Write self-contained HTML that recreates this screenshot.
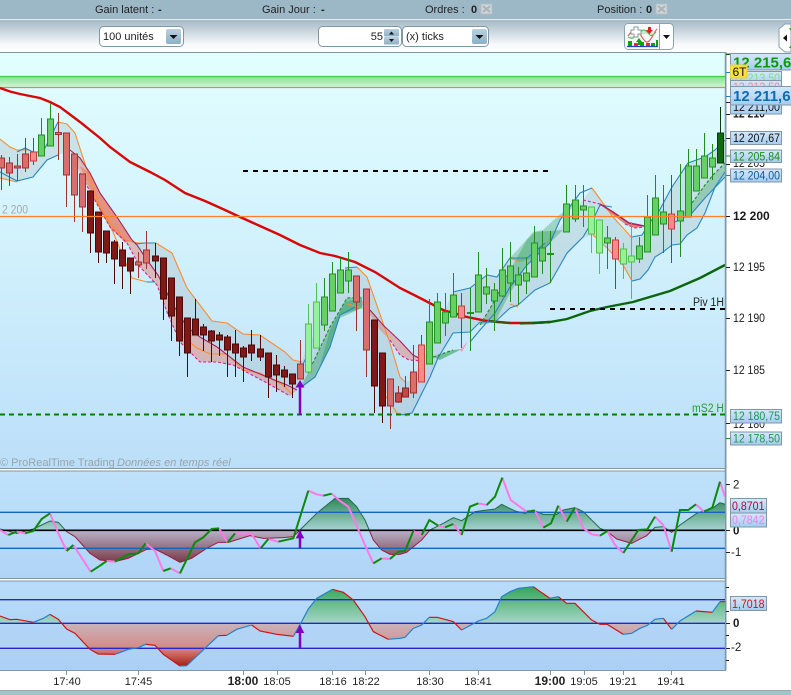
<!DOCTYPE html>
<html><head><meta charset="utf-8"><style>
html,body{margin:0;padding:0;background:#fff}
svg{display:block}
text{font-family:"Liberation Sans",sans-serif;font-size:11px;fill:#222}
.b{font-weight:bold}
.ax{font-size:11.5px;fill:#1a1a1a}
.lb{font-size:11.5px}
.t{text-anchor:middle;font-size:11px;fill:#222}
.w{fill:none}
</style></head><body>
<svg width="791" height="695" viewBox="0 0 791 695" xmlns="http://www.w3.org/2000/svg">
<defs>
<linearGradient id="tb" x1="0" y1="0" x2="0" y2="1"><stop offset="0" stop-color="#a3b9c6"/><stop offset=".75" stop-color="#f6f8fa"/><stop offset="1" stop-color="#fff"/></linearGradient>
<linearGradient id="main" x1="0" y1="0" x2="0" y2="1"><stop offset="0" stop-color="#e2ffff"/><stop offset=".5" stop-color="#d0f0fc"/><stop offset="1" stop-color="#bcdff9"/></linearGradient>
<linearGradient id="p2" x1="0" y1="0" x2="0" y2="1"><stop offset="0" stop-color="#bfe2fa"/><stop offset="1" stop-color="#b0d4f6"/></linearGradient>
<linearGradient id="p3" x1="0" y1="0" x2="0" y2="1"><stop offset="0" stop-color="#b8dcf8"/><stop offset="1" stop-color="#accff5"/></linearGradient>
<linearGradient id="band" x1="0" y1="0" x2="0" y2="1"><stop offset="0" stop-color="#7fe08e"/><stop offset="1" stop-color="#d4f8dc"/></linearGradient>
<linearGradient id="btn" x1="0" y1="0" x2="0" y2="1"><stop offset="0" stop-color="#b9d1df"/><stop offset="1" stop-color="#8cb0c4"/></linearGradient>
<linearGradient id="lab" x1="0" y1="0" x2="0" y2="1"><stop offset="0" stop-color="#d4e8fa"/><stop offset="1" stop-color="#a6ccf0"/></linearGradient>
<linearGradient id="a2" gradientUnits="userSpaceOnUse" x1="0" y1="100" x2="0" y2="292"><stop offset="0" stop-color="#2f8a5a"/><stop offset=".5" stop-color="#a8d2d2"/><stop offset=".5" stop-color="#b8b2ca"/><stop offset="1" stop-color="#7a3a48"/></linearGradient>
<linearGradient id="a3" gradientUnits="userSpaceOnUse" x1="0" y1="365" x2="0" y2="605"><stop offset="0" stop-color="#35a55c"/><stop offset=".458" stop-color="#a6d6c8"/><stop offset=".458" stop-color="#c8b4bc"/><stop offset=".77" stop-color="#d48a84"/><stop offset="1" stop-color="#a81c10"/></linearGradient>
<linearGradient id="s2" gradientUnits="userSpaceOnUse" x1="0" y1="100" x2="0" y2="292"><stop offset="0" stop-color="#1f6a4a"/><stop offset=".5" stop-color="#1f6a4a"/><stop offset=".5" stop-color="#9a1c40"/><stop offset="1" stop-color="#9a1c40"/></linearGradient>
<clipPath id="cm"><rect x="0" y="52" width="725" height="416"/></clipPath>
<clipPath id="c2"><rect x="0" y="471" width="725" height="108"/></clipPath>
<clipPath id="c3"><rect x="0" y="581" width="725" height="89"/></clipPath>
</defs>

<!-- top bar -->
<rect width="791" height="695" fill="#fff"/>
<rect width="791" height="19" fill="#9cb8c6"/>
<rect y="19" width="791" height="1" fill="#e6eef2"/>
<rect y="20" width="791" height="32" fill="url(#tb)"/>
<text x="95" y="13">Gain latent :</text><text x="158" y="13" class="b">-</text>
<text x="262" y="13">Gain Jour :</text><text x="321" y="13" class="b">-</text>
<text x="425" y="13">Ordres :</text><text x="471" y="13" class="b">0</text>
<rect x="481" y="4" width="11" height="10" fill="#cfd6da" stroke="#b4bec4"/><path d="M483 6l7 6M490 6l-7 6" stroke="#a9b3b8" stroke-width="2"/>
<text x="597" y="13">Position :</text><text x="646" y="13" class="b">0</text>
<rect x="656" y="4" width="11" height="10" fill="#cfd6da" stroke="#b4bec4"/><path d="M658 6l7 6M665 6l-7 6" stroke="#a9b3b8" stroke-width="2"/>

<!-- toolbar -->
<rect x="99.5" y="26.5" width="84" height="20" rx="4" fill="#fff" stroke="#7f98a8"/>
<text x="103" y="40">100 unités</text>
<rect x="166" y="29" width="15" height="15" rx="2" fill="url(#btn)"/><path d="M169.5 35h8l-4 4z" fill="#111"/>
<rect x="318.5" y="26.5" width="83" height="20" rx="4" fill="#fff" stroke="#7f98a8"/>
<text x="383" y="40" text-anchor="end">55</text>
<rect x="384" y="29" width="15" height="7.5" rx="1" fill="url(#btn)"/><rect x="384" y="37" width="15" height="7.5" rx="1" fill="url(#btn)"/>
<path d="M389 34.5l2.5-3 2.5 3z M389 39l2.5 3 2.5-3z" fill="#111"/>
<rect x="402.5" y="26.5" width="86" height="20" rx="4" fill="#fff" stroke="#7f98a8"/>
<text x="406" y="40">(x) ticks</text>
<rect x="472" y="29" width="15" height="15" rx="2" fill="url(#btn)"/><path d="M475.5 35h8l-4 4z" fill="#111"/>

<rect x="624.5" y="23.5" width="49" height="26" rx="4" fill="#fff" stroke="#8aa2b2"/>
<rect x="625" y="24" width="34" height="25" rx="3" fill="#f6fafb"/>
<path d="M659.5 24V49" stroke="#8aa2b2"/>
<path d="M663 35h7l-3.5 4z" fill="#111"/>
<path d="M628 36c5-7 8-8 12-2s6 11 10 6 4-8 7-11" fill="none" stroke="#e06060" stroke-width="1.2"/>
<path d="M628 37c5 3 7 0 11-4s6-4 9 0 5 3 8-1" fill="#b4e0b4" fill-opacity=".7" stroke="#50b050"/>
<path d="M631 30h3v-3h4v3h3v4h-3v3h-4v-3h-3z" fill="#fff" stroke="#8b9aa2"/>
<path d="M636 42l3-4 3 4h-2v3h-2v-3z" fill="#10a010"/>
<path d="M648 27h3v3h2l-3.5 4-3.5-4h2z" fill="#e02020"/>
<path d="M628 41h4v5h-4zM640 42h4v4h-4zM651 43h4v3h-4zM656 40h2v6h-2zM634 43h4v3h-4zM646 43h4v3h-4z" fill="#10a010"/>
<path d="M634 43h3v3h-3zM646 43h3v3h-3z" fill="#e03030"/>
<path d="M627 46.5h31" stroke="#2040d0" stroke-width="1.2"/>
<path d="M791 24h-6l-6 5v18l6 5h6z" fill="#fff" stroke="#8aa2b2"/>
<path d="M783 38l4-3.500v7z" fill="#111"/><path d="M789 28l2 3v-3zM789 48l2-3v3z" fill="#20a020"/>

<!-- panels -->
<rect x="0" y="52" width="725" height="416" fill="url(#main)"/>
<rect x="0" y="471" width="725" height="108" fill="url(#p2)"/>
<rect x="0" y="581" width="725" height="89" fill="url(#p3)"/>
<path d="M0 52.5H726V670M0 468.5H725M0 471H725M0 578.500H725M0 581H725M0 670.5H726" fill="none" stroke="#7f97a6"/>
<path d="M725.5 52V670" stroke="#7f97a6" stroke-width="1.5"/>

<!-- main chart -->
<g clip-path="url(#cm)">
<rect x="0" y="76" width="725" height="12" fill="url(#band)"/>
<path d="M0 76.5H725" stroke="#40d040" stroke-width="1.2"/>
<path d="M0 87.5H725" stroke="#e08080" stroke-width="1.2"/>
<text x="2" y="213.5" textLength="26" lengthAdjust="spacingAndGlyphs" style="fill:#a8a8a8;font-size:11.5px">2 200</text>
<text x="0" y="466" style="fill:#9aa3ab;font-size:11px">© ProRealTime Trading</text>
<text x="117" y="466" style="fill:#9aa3ab;font-size:11px;font-style:italic">Données en temps réel</text>

<!-- grey channels -->
<g fill="#8a9ca0" fill-opacity=".22">
<path d="M0 139L10 147 17 150 25 148 33 152 43 152 58 122 67 124 75 133 87 170 70 150 58 155 47 160 33 177 17 181 0 178Z"/>
<path d="M113 232L125 240 138 243 156 243 172 253 187 288 212 321 227 323 243 334 260 335 285 352 293 360 302 362 297 390 287 385 267 377 243 367 217 347 200 337 183 337 172 303 158 275 147 260 137 245 127 240Z"/>
<path d="M302 360L330 300 347 267 357 267 367 277 390 343 400 377 405 382 412 380 423 360 430 345 445 310 453 292 470 288 487 275 497 277 510 258 527 258 545 243 557 230 573 213 592 188 613 217 623 230 632 238 642 235 650 222 658 213 672 187 688 163 705 157 715 150 725 140V172L715 187 705 213 697 228 687 235 680 244 672 245 663 252 655 257 648 270 640 279 632 281 623 265 607 248 593 235 583 238 567 255 550 283 535 290 518 305 510 308 495 322 480 322 470 332 453 333 438 358 430 377 420 397 412 413 400 415 392 413 380 370 372 330 362 308 340 315 330 347 315 377 300 390Z"/>
</g>
<!-- red fills -->
<path d="M70 150L80 158 90 173 100 193 117 217 132 240 137 245 147 260 158 275 172 303 187 327 200 337 217 347 243 367 267 377 287 385 297 390 290 396 267 383 233 365 217 362 200 362 180 342 167 312 157 285 140 267 127 243 112 230 110 227 93 197 80 173Z" fill="#e4705c" fill-opacity=".42"/>
<path d="M80 166L90 173 100 193 117 217 132 240 125 243 110 227 93 197Z" fill="#ea6a4c" fill-opacity=".5"/>
<path d="M362 300L370 310 383 325 400 341 413 355 423 360 409 360 400 355 390 340 380 330 370 315 362 305Z" fill="#e4705c" fill-opacity=".42"/>
<path d="M600 204L613 212 629 223 644 226 635 228 625 224 613 215Z" fill="#ef6a54" fill-opacity=".85"/>
<path d="M460 350L468 341 462 352Z" fill="#f0a0c0"/>
<!-- green fills -->
<path d="M300 388L308 373 330 327 347 298 362 297 362 308 340 315 330 347 315 377Z" fill="#2a9a5c" fill-opacity=".4"/>
<path d="M320 365L330 347 340 318 362 308 362 297 345 302 330 330Z" fill="#2a9a5c" fill-opacity=".4"/>
<path d="M433 357L453 350 462 349 440 360Z" fill="#3aa05c" fill-opacity=".6"/>
<path d="M480 325L492 305 510 270 527 240 535 232 563 230 527 265 510 293 495 322Z" fill="#3aa05c" fill-opacity=".42"/>
<path d="M510 258L520 247 533 232 543 230 557 217 562 213 575 200 575 205 560 220 550 243 533 258 520 262Z" fill="#3aa05c" fill-opacity=".35"/>
<path d="M675 222L692 203 705 185 713 175 725 163V177L705 198 692 213Z" fill="#3aa05c" fill-opacity=".35"/>

<!-- red/green MA -->
<path d="M0 88L10 91.5 20 94 40 98 50 102 60 107 80 122 100 138 110 147 130 162 150 172 165 180 185 193 205 201 225 210 240 217 260 226 280 235 300 245 320 253 335 256 355 262 375 272 400 288 420 298 443 310 467 317 487 321 510 323 533 323 550 322" fill="none" stroke="#d80606" stroke-width="2.4"/>
<path d="M487 321L510 323M520 323.5L533 323" stroke="#0a6a0a" stroke-width="2.4" fill="none" opacity=".7"/>
<path d="M533 323L550 322 567 319 590 311 607 307 633 302 670 291 700 278 725 265" fill="none" stroke="#0b660b" stroke-width="2.4"/>

<!-- band lines -->
<g fill="none" stroke="#ff8a2a" stroke-width="1.1">
<path d="M0 139L10 147 17 150 30 150"/>
<path d="M0 178L17 182"/>
<path d="M58 122L67 124 75 133 87 170 100 207 110 223 125 240 138 243 156 243 172 253 187 288 212 321 227 323 243 334 260 335 285 352 293 360 302 362"/>
<path d="M90 190L113 232 132 278 147 282 155 282"/>
<path d="M183 337L197 348 210 354 227 354 243 370 260 373 283 385 293 395"/>
<path d="M357 267L367 277 390 343 400 377 405 382"/>
<path d="M347 304L362 308"/>
<path d="M385 395L397 413 407 416"/>
<path d="M510 258L520 262M510 304L518 307"/>
<path d="M592 188L613 217 632 238M593 235L607 248 623 265 632 281"/>
</g>
<g fill="none" stroke="#2a86c0" stroke-width="1.1">
<path d="M17 152L25 148 33 152 43 152 58 122"/>
<path d="M0 172L17 181 33 177 47 160 58 155"/>
<path d="M135 244L145 243 156 243M147 282L155 282"/>
<path d="M300 388L315 377 330 347 340 315 355 307"/>
<path d="M302 366L308 354M345 268L357 267"/>
<path d="M400 415L412 413 420 397 430 377 438 358 453 333 470 332 480 322 495 322 510 308 518 305 535 290 550 283 567 253 583 237 592 222 600 205 612 207"/>
<path d="M470 342L480 330 495 313 510 287 527 265 550 243 560 220 580 193 592 188"/>
<path d="M453 292L470 288 487 275 497 277 510 258 527 258 545 243"/>
<path d="M632 281L640 279 648 270 655 257 663 252 672 245 680 244 687 235 697 228 705 213 715 187 725 172"/>
<path d="M632 237L642 235 650 222 658 213 672 187 688 163 705 157 715 150 725 140"/>
<path d="M675 222L692 213 705 198 725 177"/>
</g>
<g fill="none" stroke="#a82060" stroke-width="1.1">
<path d="M70 150L80 158 90 173 100 193 117 217 132 240 137 245 147 260 158 275 172 303 187 327 200 337 217 347 243 367 267 377 287 385 297 390"/>
<path d="M370 310L383 325 400 341 413 355 423 360"/>
<path d="M600 204L613 212 629 223 644 226" stroke-width="1.5"/>
</g>
<g fill="none" stroke="#d8209a" stroke-width="1.1" stroke-dasharray="3 2">
<path d="M80 173L93 197 110 227 127 243 140 267 157 285 167 312 180 342 200 362 217 362 233 365 267 383 290 396"/>
<path d="M390 340L400 355 409 360 423 361"/>
<path d="M625 224L635 228 644 227M583 200L600 204"/>
</g>
<g fill="none" stroke="#1a9020" stroke-width="1.1" stroke-dasharray="3 2">
<path d="M308 373L330 327 347 298 362 297"/>
<path d="M433 357L453 350M480 325L492 305 510 270"/>
<path d="M692 203L705 185 713 175 725 163"/>
</g>

<!-- candle wicks -->
<path class="w" stroke="#a03232" d="M1.5 155V190M9.5 157V186M17.5 154V181M25.5 138V172M58.5 113V160M66.5 133V207M74.5 154V222M82.5 174V232M138.5 252V278M146.5 231V269M300.5 340V379M356.5 276V331M366.5 289V377M390.5 379V429M413.5 345V398M398.5 386V403M405.5 376V397M33.5 138V165M421.5 335V382M461.5 293V348M615.5 237V289M671.5 175V263"/>
<path class="w" stroke="#4a0808" d="M90.5 191V253M98.5 212V263M106.5 231V263M114.5 240V284M122.5 242V289M130.5 258V294M155.5 243V278M163.5 258V320M171.5 278V341M179.5 297V356M187.5 318V377M195.5 299V335M203.5 324V351M211.5 330V362M219.5 332V356M227.5 335V377M235.5 330V377M243.5 346V382M251.5 330V361M260.5 335V361M268.5 353V398M276.5 355V392M284.5 366V387M292.5 374V398M374.5 320V413M382.5 353V423"/>
<path class="w" stroke="#1e8c1e" d="M41.5 118V156M50.5 103V146M324.5 278V331M332.5 262V311M340.5 258V293M348.5 252V293M429.5 299V364M437.5 293V343M445.5 293V336M453.5 273V317M470.5 288V351M478.5 252V312M486.5 268V304M494.5 283V331M502.5 248V297M510.5 242V302M518.5 267V305M526.5 257V294M534.5 226V277M542.5 231V274M550.5 231V283M566.5 185V232M575.5 185V222M583.5 185V227M607.5 226V269M639.5 237V263M647.5 195V252M655.5 175V235M663.5 185V253M680.5 164V257M688.5 149V217M696.5 149V191M704.5 133V178M712.5 144V180"/>
<path class="w" stroke="#50c050" d="M308.5 304V372M316.5 283V348M591.5 207V253M599.5 220V274M623.5 243V279M631.5 222V299"/>
<path class="w" stroke="#0a3a0a" d="M720.5 107V163"/>
<!-- candle bodies -->
<path fill="#d96e6e" stroke="#a03232" d="M-1.5 158h6v10h-6zM6.5 163h6v10h-6zM14.5 166h6v2h-6zM22.5 154h6v14h-6zM55.5 132.500h6v2h-6zM63.5 133h6v42h-6zM71.5 154h6v41h-6zM79.5 174h6v33h-6zM135.5 262h6v3h-6zM143.5 250h6v13h-6zM297.5 364h6v15h-6zM353.5 276h6v26h-6zM363.5 289h6v61h-6zM387.5 379h6v27h-6zM410.5 372h6v21h-6z"/>
<path fill="#c04a4a" stroke="#8a2020" d="M395.5 393h6v9h-6zM402.5 388h6v9h-6z"/>
<path fill="#fa8a8a" stroke="#c04040" d="M30.5 152h6v9h-6zM418.5 345h6v37h-6zM458.5 306h6v12h-6zM612.5 240h6v19h-6zM668.5 214h6v15h-6z"/>
<path fill="#801818" stroke="#4a0808" d="M87.5 191h6v42h-6zM95.5 212h6v40h-6zM103.5 231h6v22h-6zM111.5 242h6v17h-6zM119.5 250h6v16h-6zM127.5 258h6v13h-6zM152.5 256h6v5h-6zM160.5 258h6v41h-6zM168.5 278h6v38h-6zM176.5 297h6v44h-6zM184.5 318h6v35h-6zM192.5 319h6v16h-6zM200.5 327h6v8h-6zM208.5 331h6v10h-6zM216.5 335h6v5h-6zM224.5 337h6v13h-6zM232.5 344h6v9h-6zM240.5 348h6v9h-6zM248.5 345h6v8h-6zM257.5 349h6v8h-6zM265.5 353h6v24h-6zM273.5 365h6v10h-6zM281.5 370h6v7h-6zM289.5 374h6v10h-6zM371.5 320h6v66h-6zM379.5 353h6v53h-6z"/>
<path fill="#66cf66" stroke="#228f22" d="M38.5 135h6v21h-6zM47.5 119h6v27h-6zM321.5 297h6v28h-6zM329.5 274h6v37h-6zM337.5 270h6v23h-6zM345.5 270h6v11h-6zM426.5 322h6v42h-6zM434.5 302h6v41h-6zM442.5 312h6v11h-6zM450.5 295h6v22h-6zM467.5 312.500h6v1h-6zM475.5 275h6v37h-6zM483.5 287h6v7h-6zM491.5 290h6v11h-6zM499.5 270h6v26h-6zM507.5 266h6v17h-6zM515.5 275h6v10h-6zM523.5 273h6v8h-6zM531.5 243h6v34h-6zM539.5 248h6v13h-6zM547.5 253.500h6v1h-6zM563.5 204h6v28h-6zM572.5 200h6v19h-6zM580.5 206h6v4h-6zM604.5 238h6v5h-6zM636.5 246h6v13h-6zM644.5 217h6v35h-6zM652.5 198h6v37h-6zM660.5 212h6v12h-6zM677.5 211h6v10h-6zM685.5 166h6v51h-6zM693.5 166h6v25h-6zM701.5 156h6v22h-6zM709.5 158h6v9h-6z"/>
<path fill="#98f098" stroke="#50c050" d="M305.5 324h6v48h-6zM313.5 302h6v46h-6zM588.5 207h6v27h-6zM596.5 220h6v33h-6zM620.5 249h6v15h-6zM628.5 256h6v6h-6z"/>
<path fill="#0f6a0f" stroke="#0a3a0a" d="M717.5 133h6v30h-6z"/>

<!-- levels -->
<path d="M0 216.5H725" stroke="#ff7f2a" stroke-width="1.2"/>
<path d="M243 171H548" stroke="#000" stroke-width="2" stroke-dasharray="5 5"/>
<path d="M550 309H725" stroke="#000" stroke-width="2" stroke-dasharray="5 5"/>
<path d="M0 414.5H725" stroke="#008000" stroke-width="2" stroke-dasharray="5 4"/>
<text x="693" y="306" textLength="31" lengthAdjust="spacingAndGlyphs" style="font-size:11.5px;fill:#222">Piv 1H</text>
<text x="692" y="412" textLength="32" lengthAdjust="spacingAndGlyphs" style="font-size:11.5px;fill:#2a9a2a">mS2 H</text>
<path d="M300 415V386" stroke="#8000c0" stroke-width="2.5"/><path d="M300 380l-4.500 7.500h9z" fill="#8000c0"/>
</g>

<!-- panel 2 -->
<g clip-path="url(#c2)">
<g transform="translate(0,465) scale(.33333)">
<path d="M0 196L0 192 50 205 100 192 150 168 175 172 200 200 225 215 270 265 300 285 345 290 385 280 440 253 465 252 500 270 540 292 575 280 620 250 655 232 685 232 750 212 790 220 850 218 880 215 900 195 950 145 1005 100 1045 100 1070 125 1095 165 1120 225 1145 255 1170 268 1200 268 1220 262 1265 225 1290 195 1330 175 1360 158 1385 167 1425 140 1485 132 1505 118 1545 138 1575 145 1600 135 1630 148 1670 148 1690 135 1725 128 1750 140 1800 190 1820 198 1850 222 1895 235 1940 212 1965 187 1990 185 2015 202 2040 180 2090 145 2140 128 2160 113 2175 118V196Z" fill="url(#a2)"/>
<path d="M0 192L50 205 100 192 150 168 175 172 200 200 225 215 270 265 300 285 345 290 385 280 440 253 465 252 500 270 540 292 575 280 620 250 655 232 685 232 750 212 790 220 850 218 880 215 900 195 950 145 1005 100 1045 100 1070 125 1095 165 1120 225 1145 255 1170 268 1200 268 1220 262 1265 225 1290 195 1330 175 1360 158 1385 167 1425 140 1485 132 1505 118 1545 138 1575 145 1600 135 1630 148 1670 148 1690 135 1725 128 1750 140 1800 190 1820 198 1850 222 1895 235 1940 212 1965 187 1990 185 2015 202 2040 180 2090 145 2140 128 2160 113 2175 118" fill="none" stroke="url(#s2)" stroke-width="3"/>
<path d="M0 142H2175M0 250H2175" stroke="#1565c0" stroke-width="4"/>
<path d="M0 196H2175" stroke="#000" stroke-width="5"/>
<path fill="none" stroke="#ff78e8" stroke-width="6" d="M0 195L25 210M50 200L75 205M150 145L175 205 200 258M220 240L272 320M320 288L345 290M437 235L465 258 490 318M512 310L540 325M657 190L683 232M705 205L755 207 782 250M805 222L835 230M925 77L950 88 970 92M995 86L1020 108 1045 125 1095 240 1120 295M1145 280L1170 282M1240 198L1265 210M1315 182L1335 187M1360 177L1385 210M1435 115L1460 120M1507 38L1532 105 1580 140M1605 137L1630 188M1675 122L1700 170M1725 128L1750 190 1775 208 1800 212M1822 198L1845 240 1870 264M1965 155L1990 180 2015 260M2088 118L2112 140M2160 50L2175 95"/>
<path fill="none" stroke="#0a8a0a" stroke-width="6" d="M25 210L50 200M75 205L100 198 125 162 150 145M200 258L220 240M272 320L300 302 320 288M345 290L385 268 415 265 437 235M490 318L512 310M540 325L585 232 610 217 635 192 657 190M683 232L705 205M782 250L805 222M835 230L880 220 925 77M970 92L995 86M1120 295L1145 280M1170 282L1195 260 1215 258 1240 198M1265 210L1288 165 1315 182M1335 187L1360 177M1385 210L1410 125 1435 115M1460 120L1485 95 1507 38M1580 140L1605 137M1630 188L1653 175 1675 122M1700 170L1725 128M1800 212L1822 198M1870 264L1915 195 1942 193 1965 155M2015 260L2040 135 2065 135 2088 118M2112 140L2137 128 2160 50"/>
<path d="M900 196V250" stroke="#8000c0" stroke-width="7.5"/><path d="M900 196l-13 24h26z" fill="#8000c0"/>
</g>
</g>

<!-- panel 3 -->
<g clip-path="url(#c3)">
<g transform="translate(0,465) scale(.33333)">
<path d="M0 475V453L30 464 50 463 100 472 130 460 150 448 175 463 200 492 225 505 270 553 295 567 345 568 385 553 415 548 437 538 465 541 490 568 540 603 560 602 620 545 655 512 680 511 710 493 755 480 780 498 830 508 880 514 905 470 925 432 950 400 997 373 1030 382 1060 405 1095 455 1120 500 1165 523 1200 520 1215 517 1240 490 1265 480 1288 457 1312 457 1360 470 1385 495 1435 468 1460 460 1485 440 1505 395 1530 380 1555 370 1600 365 1625 383 1650 400 1675 395 1700 415 1725 415 1775 465 1800 478 1822 478 1870 508 1895 505 1920 490 1942 481 1965 463 1990 460 2015 493 2040 468 2088 438 2137 442 2160 410 2175 410V475Z" fill="url(#a3)"/>
<path d="M0 404H2175M0 475H2175M0 550H2175" stroke="#2626cc" stroke-width="4"/>
<path fill="none" stroke="#d01010" stroke-width="3.5" d="M0 453L30 464 50 463 100 472M150 448L175 463 200 492 225 505 270 553 295 567 345 568M437 538L465 541 490 568 540 603M655 512L680 511M755 480L780 498 830 508 880 514M997 373L1030 382 1060 405 1095 455 1120 500 1165 523M1288 457L1312 457 1360 470 1385 495M1600 365L1625 383 1650 400M1675 395L1700 415 1725 415 1775 465 1800 478 1822 478 1870 508M1990 460L2015 493M2088 438L2137 442M2160 410L2175 410"/>
<path fill="none" stroke="#2080d0" stroke-width="3.5" d="M100 472L130 460 150 448M345 568L385 553 415 548 437 538M540 603L560 602 620 545 655 512M680 511L710 493 755 480M880 514L905 470 925 432 950 400 997 373M1165 523L1200 520 1215 517 1240 490 1265 480 1288 457M1385 495L1435 468 1460 460 1485 440 1505 395 1530 380 1555 370 1600 365M1650 400L1675 395M1870 508L1895 505 1920 490 1942 481 1965 463 1990 460M2015 493L2040 468 2088 438M2137 442L2160 410"/>
<path d="M900 482V550" stroke="#8000c0" stroke-width="7.5"/><path d="M900 480l-13 24h26z" fill="#8000c0"/>
</g>
</g>

<!-- right axis: ticks and labels -->
<path stroke="#222" d="M726 54.5h4M726 102.5h4M726 114.5h4M726 138.5h4M726 164.5h4M726 216.5h4M726 267.5h4M726 318.5h4M726 370.5h4M726 423.5h4M726 484.5h4M726 530.5h4M726 552.5h4M726 587.5h3M726 611.5h3M726 623.5h4M726 635.5h3M726 648.5h4M726 660.5h3"/>
<path stroke="#109010" d="M726 54h4M726 156h4M726 438.5h4"/>
<path stroke="#2080c0" d="M726 72.5h4M726 96.5h4M726 175.5h4"/>
<text x="733" y="117.5" class="ax b" textLength="32" lengthAdjust="spacingAndGlyphs">12 210</text>
<text x="733" y="167" class="ax" textLength="32" lengthAdjust="spacingAndGlyphs">12 205</text>
<text x="733" y="220" class="ax b" style="font-size:12px">12 200</text>
<text x="733" y="271" class="ax" textLength="32" lengthAdjust="spacingAndGlyphs">12 195</text>
<text x="733" y="322" class="ax" textLength="32" lengthAdjust="spacingAndGlyphs">12 190</text>
<text x="733" y="374" class="ax" textLength="32" lengthAdjust="spacingAndGlyphs">12 185</text>
<text x="733" y="428" class="ax" textLength="32" lengthAdjust="spacingAndGlyphs">12 180</text>

<rect x="730.5" y="53.5" width="62" height="16.5" fill="url(#lab)" stroke="#7f97a6"/>
<text x="733" y="67.5" class="b" style="font-size:15px;fill:#0c9a0c">12 215,60</text>
<rect x="730.5" y="71.5" width="51" height="13" fill="url(#lab)" stroke="#7f97a6"/>
<text x="733" y="82" class="lb" textLength="47" lengthAdjust="spacingAndGlyphs" style="fill:#7fe07f">12 213,50</text>
<rect x="730.5" y="80.5" width="51" height="13" fill="url(#lab)" stroke="#7f97a6"/>
<text x="733" y="91" class="lb" textLength="47" lengthAdjust="spacingAndGlyphs" style="fill:#f09090">12 212,50</text>
<rect x="730.5" y="65" width="16.5" height="13" fill="#f8e040" stroke="#e8d040"/>
<text x="732.5" y="76" style="font-size:12px;fill:#111">6T</text>
<rect x="730.5" y="100.5" width="51" height="13.5" fill="url(#lab)" stroke="#7f97a6"/>
<text x="733" y="111" class="lb" textLength="47" lengthAdjust="spacingAndGlyphs" style="fill:#111">12 211,00</text>
<rect x="730.5" y="86.5" width="62" height="18.5" fill="url(#lab)" stroke="#7f97a6"/>
<text x="733" y="101" class="b" style="font-size:15px;fill:#0e6cb0">12 211,60</text>
<rect x="730.5" y="131.5" width="51" height="13" fill="url(#lab)" stroke="#7f97a6"/>
<text x="733" y="142" class="lb" textLength="47" lengthAdjust="spacingAndGlyphs" style="fill:#111">12 207,67</text>
<rect x="730.5" y="150" width="51" height="12.5" fill="url(#lab)" stroke="#7f97a6"/>
<text x="733" y="160.5" class="lb" textLength="47" lengthAdjust="spacingAndGlyphs" style="fill:#1a8a1a">12 205,84</text>
<rect x="730.5" y="169" width="51" height="13" fill="url(#lab)" stroke="#7f97a6"/>
<text x="733" y="179.5" class="lb" textLength="47" lengthAdjust="spacingAndGlyphs" style="fill:#0f5c96">12 204,00</text>
<rect x="730.5" y="409.5" width="51" height="13.5" fill="url(#lab)" stroke="#7f97a6"/>
<text x="733" y="420" class="lb" textLength="47" lengthAdjust="spacingAndGlyphs" style="fill:#1a9a4a">12 180,75</text>
<rect x="730.5" y="432" width="51" height="13" fill="url(#lab)" stroke="#7f97a6"/>
<text x="733" y="442.5" class="lb" textLength="47" lengthAdjust="spacingAndGlyphs" style="fill:#1a9a4a">12 178,50</text>

<text x="733" y="488.5" class="ax">2</text>
<text x="733" y="534.5" class="ax b">0</text>
<text x="731" y="556" class="ax">-1</text>
<rect x="730.5" y="498.5" width="36" height="14.5" fill="url(#lab)" stroke="#7f97a6"/>
<text x="732" y="510" class="lb" textLength="32.5" lengthAdjust="spacingAndGlyphs" style="fill:#a01040">0,8701</text>
<rect x="730.5" y="513" width="36" height="14" fill="url(#lab)" stroke="#7f97a6"/>
<text x="732" y="524" class="lb" textLength="32.5" lengthAdjust="spacingAndGlyphs" style="fill:#ff78e8">0,7842</text>
<rect x="730.5" y="596.5" width="36" height="14" fill="url(#lab)" stroke="#7f97a6"/>
<text x="732" y="608" class="lb" textLength="32.5" lengthAdjust="spacingAndGlyphs" style="fill:#d01010">1,7018</text>
<text x="733" y="627" class="ax b">0</text>
<text x="731" y="651" class="ax">-2</text>

<!-- time axis -->
<path stroke="#7f97a6" d="M66.5 670v5M138.5 670v5M243.5 670v5M277.5 670v5M332.5 670v5M365.5 670v5M429.5 670v5M478.5 670v5M550.5 670v5M584.5 670v5M623.5 670v5M671.5 670v5"/>
<text x="67" y="685" class="t">17:40</text>
<text x="138.5" y="685" class="t">17:45</text>
<text x="243" y="685" class="t b" style="font-size:12px">18:00</text>
<text x="277" y="685" class="t">18:05</text>
<text x="333" y="685" class="t">18:16</text>
<text x="366" y="685" class="t">18:22</text>
<text x="430" y="685" class="t">18:30</text>
<text x="478" y="685" class="t">18:41</text>
<text x="550" y="685" class="t b" style="font-size:12px">19:00</text>
<text x="584" y="685" class="t">19:05</text>
<text x="623" y="685" class="t">19:21</text>
<text x="671" y="685" class="t">19:41</text>
<rect y="690" width="791" height="1" fill="#9aa8b0"/>
<rect y="691" width="791" height="4" fill="#a0c4cc"/>
</svg>
</body></html>
